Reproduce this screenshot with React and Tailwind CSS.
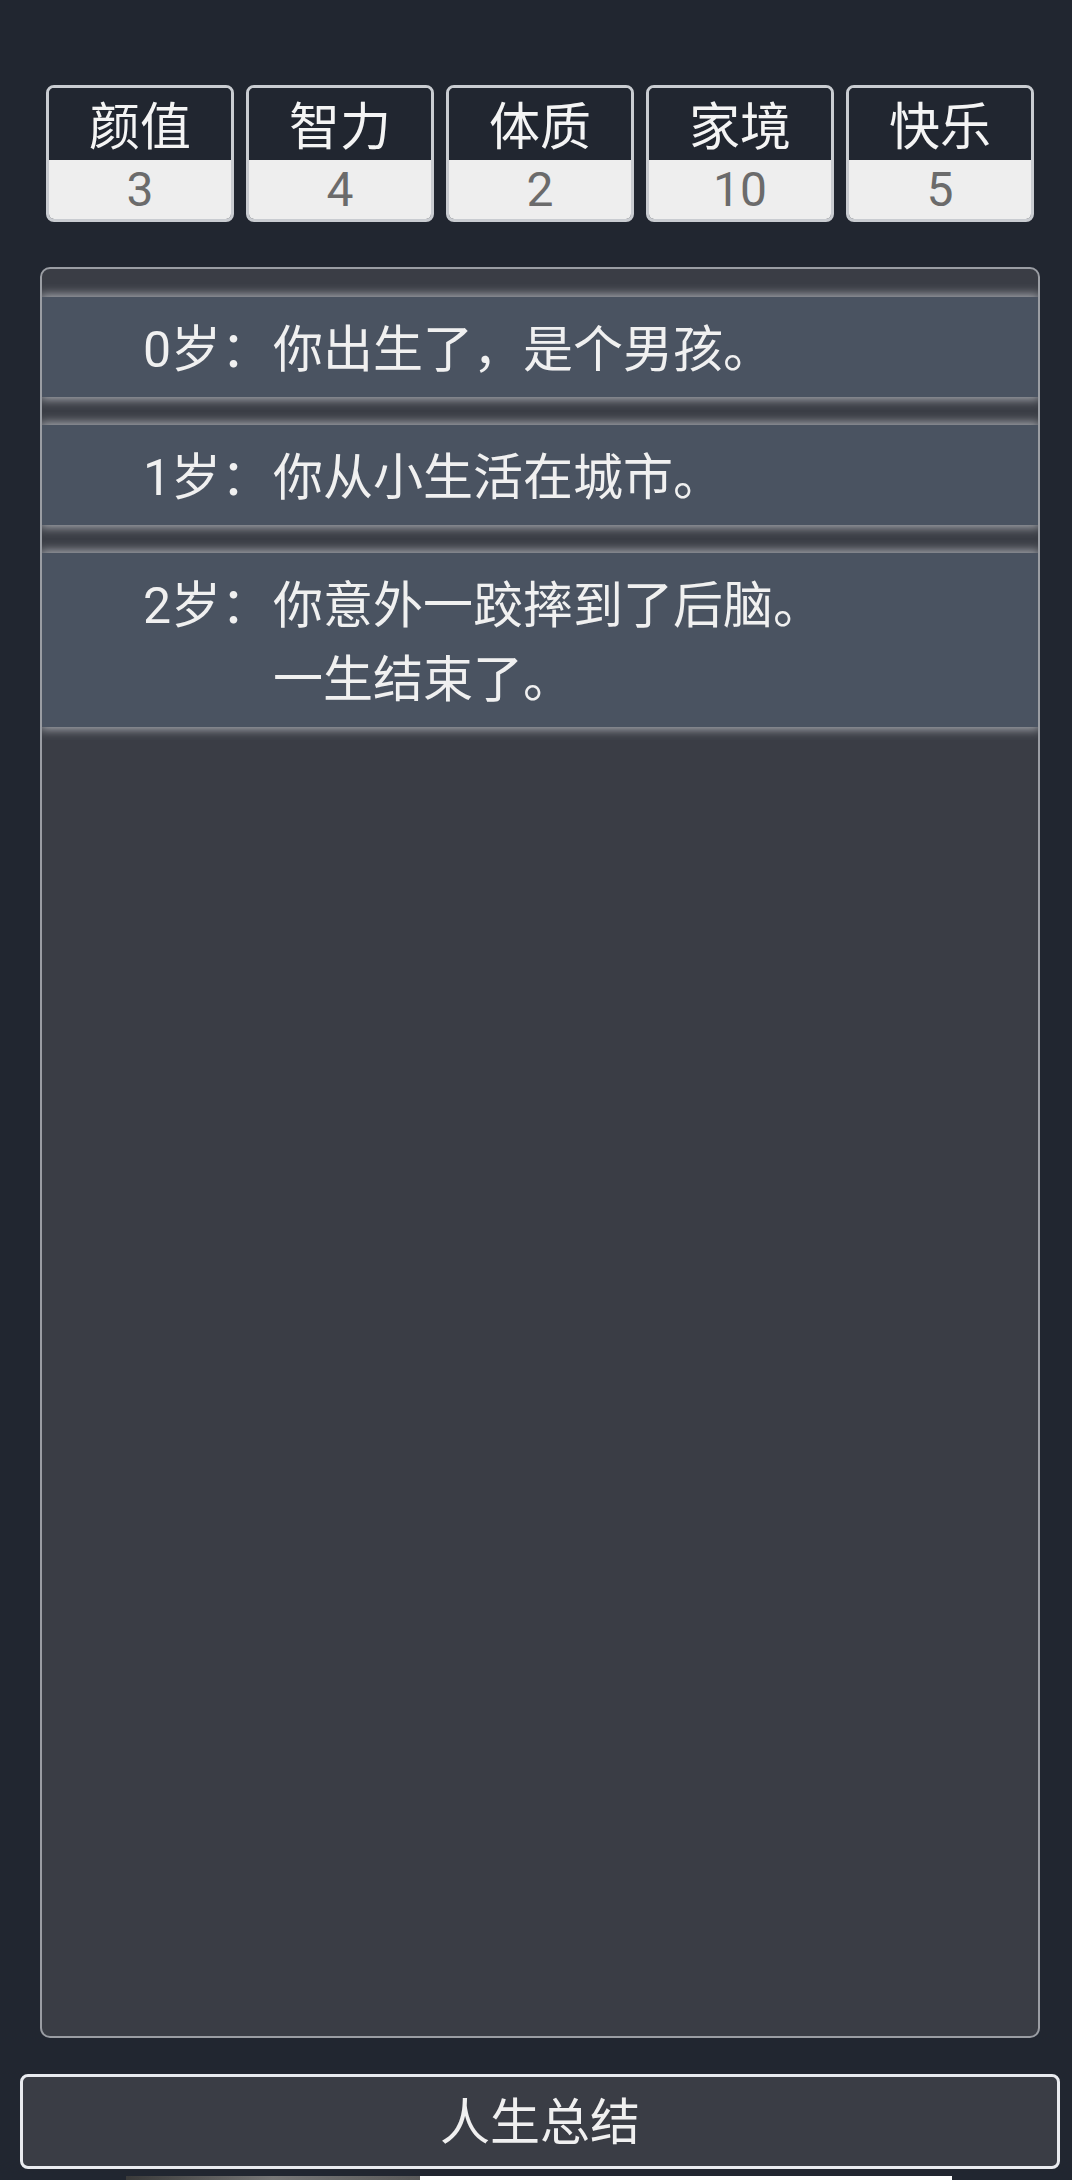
import React from 'react';

const FONT = { fontFamily: "Roboto, 'Noto Sans CJK SC', 'Noto Sans', sans-serif" };

const STATS = [
  { label: '颜值', value: 3 },
  { label: '智力', value: 4 },
  { label: '体质', value: 2 },
  { label: '家境', value: 10 },
  { label: '快乐', value: 5 },
];

const EVENTS = [
  { age: 0, lines: ['你出生了，是个男孩。'] },
  { age: 1, lines: ['你从小生活在城市。'] },
  { age: 2, lines: ['你意外一跤摔到了后脑。', '一生结束了。'] },
];

const StatBox = ({ label, value }) => (
  <div className="flex-1 flex flex-col border-[3px] border-[#c9ccd1] rounded-[8px] overflow-hidden">
    <div className="h-[72px] bg-[#212630] text-[#f4f4f4] text-[51px] leading-[72px] text-center pt-[4px]">
      {label}
    </div>
    <div className="h-[59px] bg-[#eeeeee] text-[#6b6b6b] text-[48px] leading-[59px] text-center">
      {value}
    </div>
  </div>
);

const EventRow = ({ age, lines }) => (
  <li className="bg-[#4a5361] shadow-[0_0_10px_2px_rgba(205,207,212,0.8)] pt-[16px] pb-[10px] pl-[101px] flex text-[50px] leading-[74px] text-[#f0f0f0]">
    <span className="w-[130px] shrink-0">{age}岁：</span>
    <div className="flex flex-col">
      {lines.map((line) => (
        <span key={line}>{line}</span>
      ))}
    </div>
  </li>
);

export default function App() {
  return (
    <div className="min-h-[2180px] w-full bg-[#212630] overflow-hidden" style={FONT}>
      <div className="pl-[8px]">
        {/* 属性 */}
        <div className="pt-[85px] mx-[38px] flex gap-[12px]">
          {STATS.map((s) => (
            <StatBox key={s.label} {...s} />
          ))}
        </div>

        {/* 人生记录 */}
        <div className="mt-[45px] mx-[32px] h-[1771px] bg-[#3a3d45] border-2 border-[#9a9da3] rounded-[10px] overflow-hidden">
          <ul className="pt-[28px] flex flex-col gap-[28px]">
            {EVENTS.map((e) => (
              <EventRow key={e.age} {...e} />
            ))}
          </ul>
        </div>

        {/* 按钮 */}
        <button className="mt-[36px] mx-[12px] w-[1040px] h-[95px] pt-[4px] bg-[#3a3d45] border-[3px] border-[#e9ebef] rounded-[8px] text-[50px] text-[#f0f0f0] flex items-center justify-center">
          人生总结
        </button>

        <div className="mt-[7px] flex">
          <div className="ml-[118px] w-[294px] h-[10px] bg-gradient-to-r from-[#3a3a3a] via-[#777777] to-[#5a5a5a]" />
          <div className="w-[532px] h-[10px] bg-white" />
        </div>
      </div>
    </div>
  );
}
